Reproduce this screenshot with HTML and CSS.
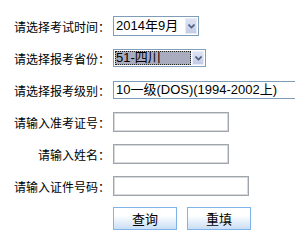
FILE: index.html
```html
<!DOCTYPE html>
<html lang="zh-CN">
<head>
  <meta charset="UTF-8" />
  <title>成绩查询</title>
  <link rel="stylesheet" href="styles.css">
</head>
<body>
  <form class="query">
    <div class="row">
      <label class="label">请选择考试时间：</label>
      <div class="combo combo-date">
        <span class="combo-text">2014年9月</span>
        <span class="combo-btn"><svg width="7" height="5" viewBox="0 0 7 5"><path d="M0.5 0.5 L3.5 3.5 L6.5 0.5" fill="none" stroke="#4d5f80" stroke-width="1.6"/></svg></span>
      </div>
    </div>
    <div class="row">
      <label class="label">请选择报考省份：</label>
      <div class="combo combo-province">
        <span class="combo-text active">51-四川</span>
        <span class="combo-btn"><svg width="7" height="5" viewBox="0 0 7 5"><path d="M0.5 0.5 L3.5 3.5 L6.5 0.5" fill="none" stroke="#4d5f80" stroke-width="1.6"/></svg></span>
      </div>
    </div>
    <div class="row">
      <label class="label">请选择报考级别：</label>
      <div class="combo combo-level">
        <span class="combo-text">10一级(DOS)(1994-2002上)</span>
      </div>
    </div>
    <div class="row">
      <label class="label">请输入准考证号：</label>
      <input class="field" type="text">
    </div>
    <div class="row">
      <label class="label">请输入姓名：</label>
      <input class="field" type="text">
    </div>
    <div class="row">
      <label class="label">请输入证件号码：</label>
      <input class="field field-wide" type="text">
    </div>
    <div class="row">
      <span class="label"></span>
      <div class="actions">
        <button class="btn" type="button">查询</button>
        <button class="btn" type="reset">重填</button>
      </div>
    </div>
  </form>
</body>
</html>
```

FILE: styles.css
```css
body {
  margin: 0;
  background: #fff;
  color: #000;
  font-family: "Noto Sans CJK SC", sans-serif;
  font-size: 12px;
  overflow: hidden;
}

.query {
  padding-top: 10px;
}

.row {
  display: flex;
  align-items: center;
  height: 32px;
}

.label {
  width: 110px;
  flex-shrink: 0;
  text-align: right;
  margin-right: 3px;
  font-size: 12px;
  white-space: nowrap;
}

.combo {
  display: flex;
  align-items: center;
  box-sizing: border-box;
  height: 19px;
  border: 1px solid #7f9db9;
  background: #fff;
  font-family: "Liberation Sans", "Noto Sans CJK SC", sans-serif;
  font-size: 13px;
  padding: 1px;
  flex-shrink: 0;
}

.combo-date { width: 86px; height: 20px; }
.combo-province { width: 93px; height: 18px; }
/* list is wider than the window, the right end is cut off */
.combo-level { width: 182px; height: 18px; border-right: none; overflow: hidden; }

.combo-text {
  flex: 1;
  line-height: 14px;
  padding-left: 1px;
  white-space: nowrap;
}

.combo-text.active {
  background: #a9acbe;
  outline: 1px dotted #222;
  outline-offset: -1px;
  margin-right: 1px;
}

.combo-btn {
  display: flex;
  align-items: center;
  justify-content: center;
  box-sizing: border-box;
  width: 12px;
  height: 100%;
  background: linear-gradient(#dde3f3, #c3cce6);
  border: 1px solid #e8ecf7;
}

.field {
  box-sizing: border-box;
  width: 116px;
  height: 20px;
  margin: 0;
  border: 1px solid #9fa5aa;
  box-shadow: inset 0 0 0 1px #d6d9dc;
  background: #fff;
}

.field-wide { width: 136px; }

.actions {
  display: flex;
  gap: 10px;
}

.btn {
  box-sizing: border-box;
  width: 64px;
  height: 23px;
  margin: 0;
  padding: 0;
  border: 1px solid #7eb4ea;
  background: linear-gradient(#ffffff, #ffffff 35%, #c9def5);
  font-family: "Noto Sans CJK SC", sans-serif;
  font-size: 13px;
  color: #000;
}
```
